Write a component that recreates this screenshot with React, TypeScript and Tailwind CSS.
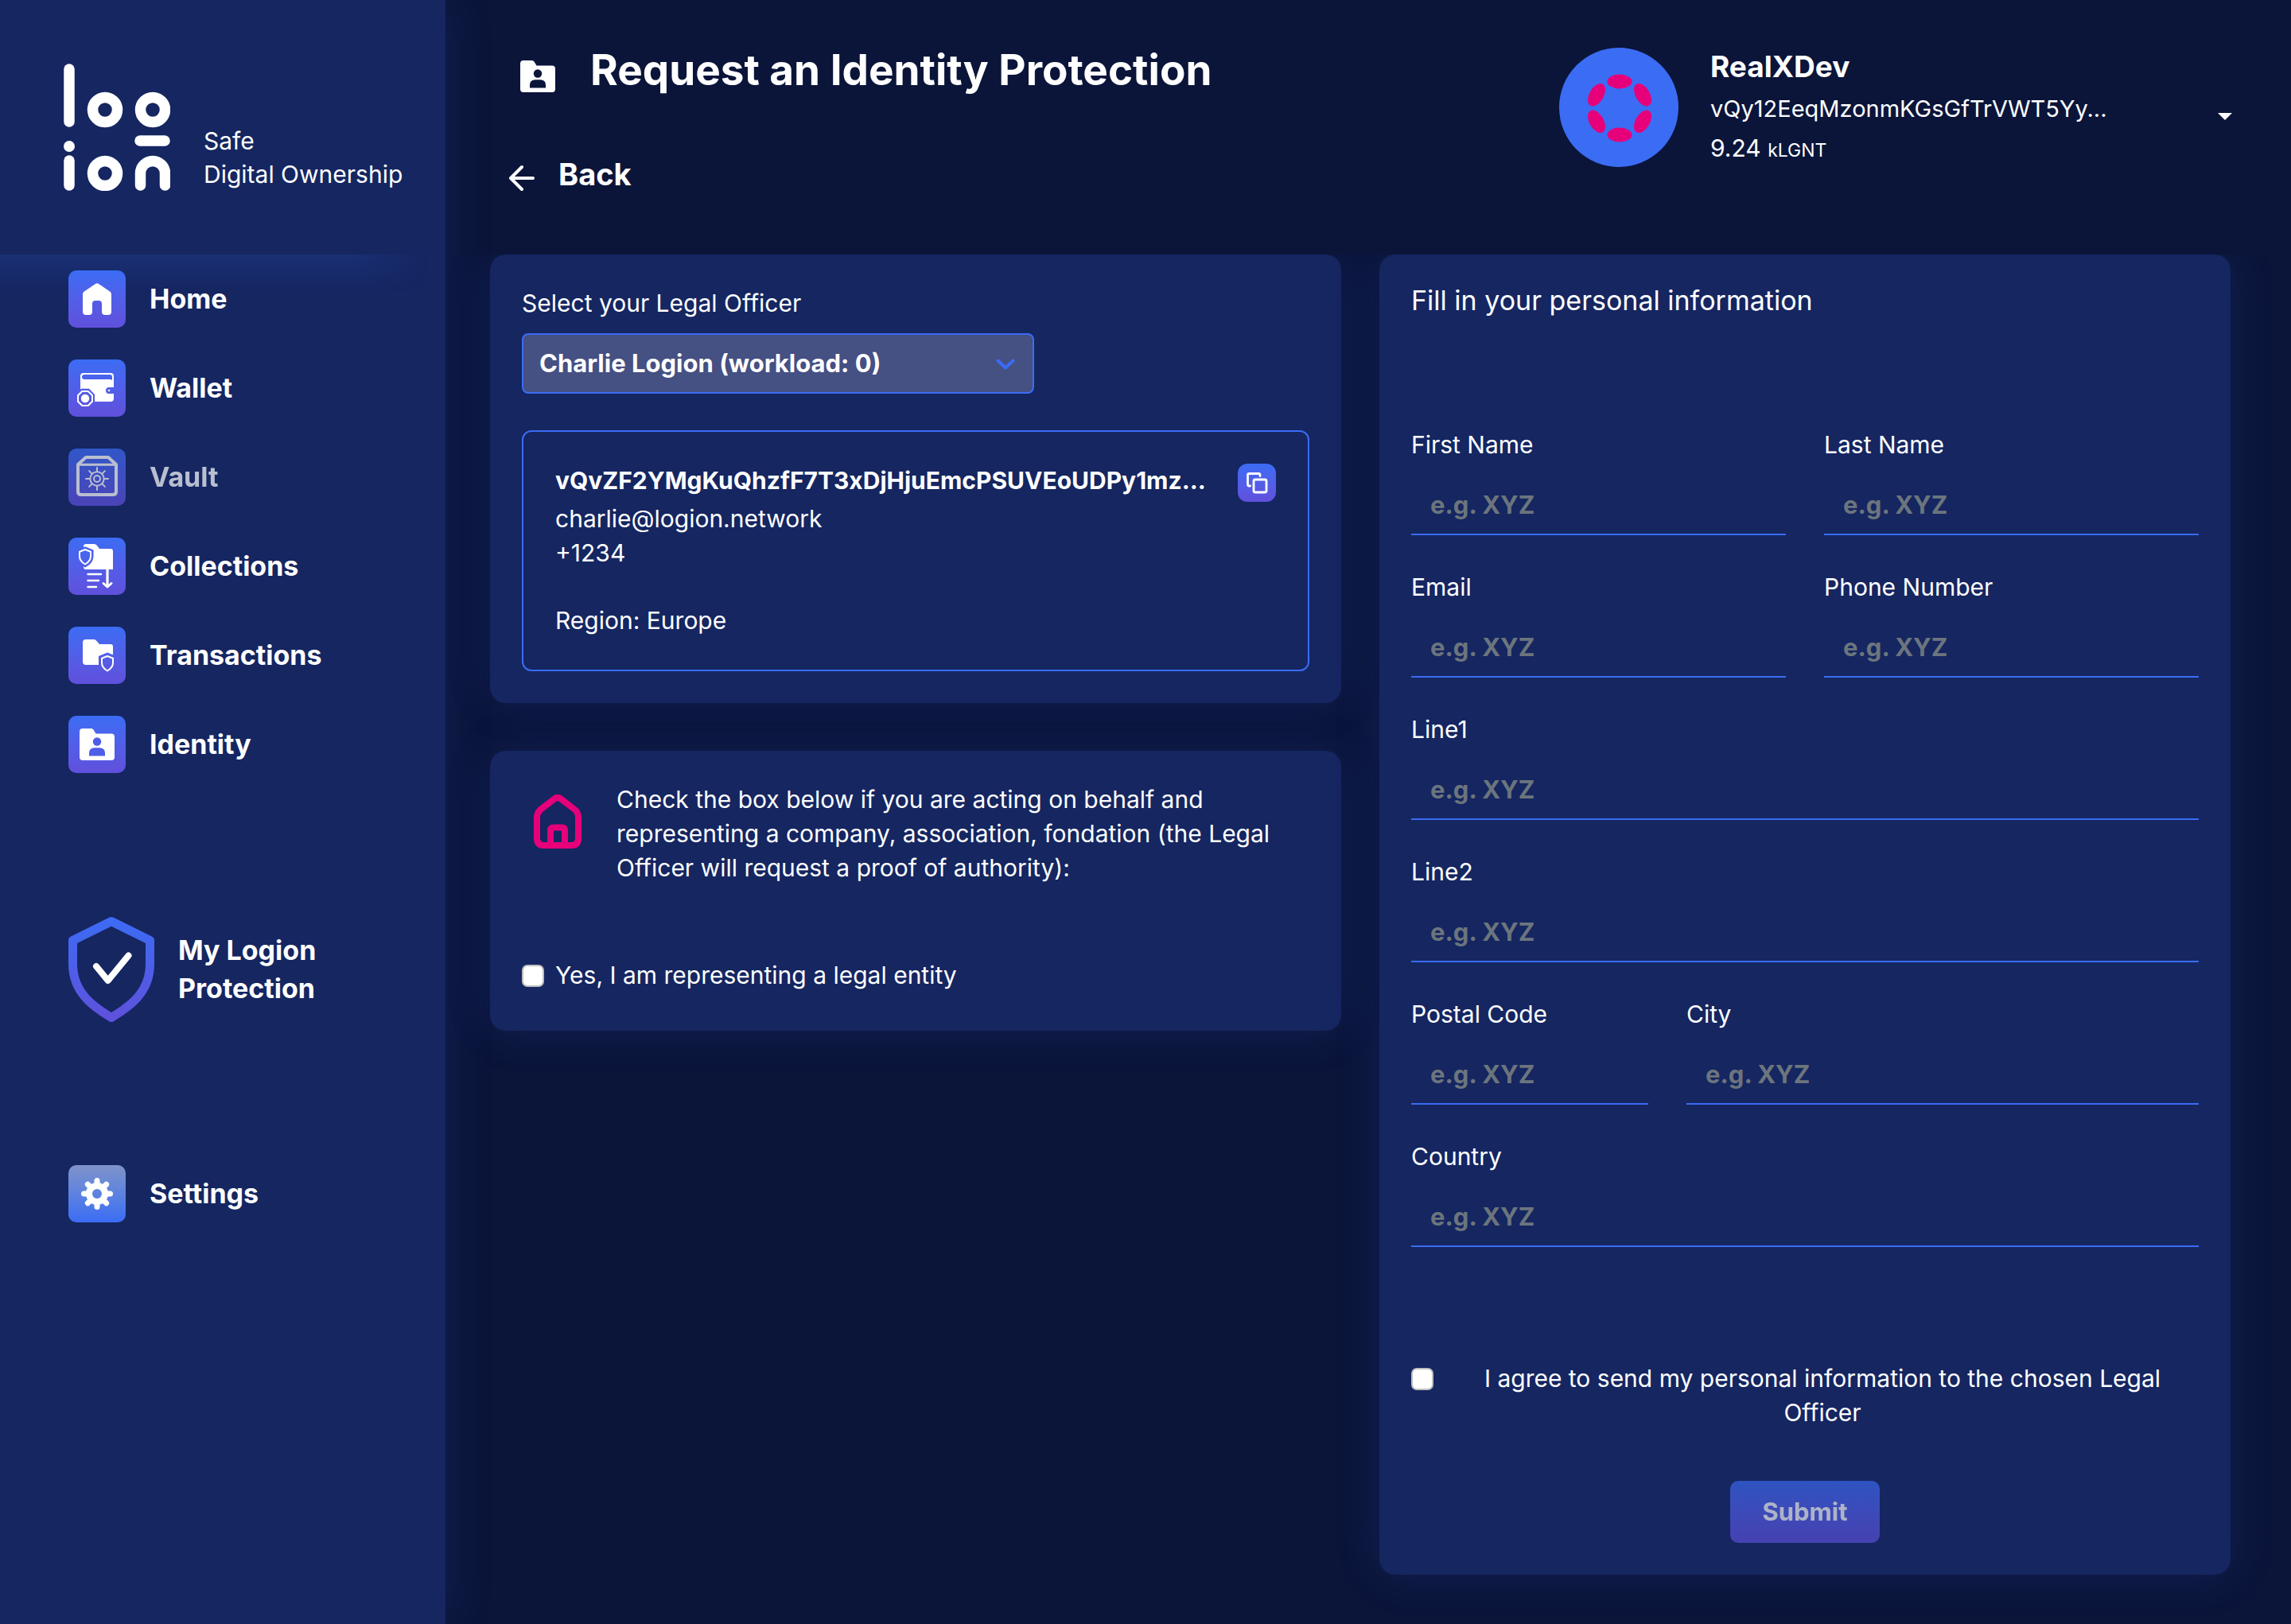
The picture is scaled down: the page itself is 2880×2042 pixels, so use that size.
import type { ReactNode } from "react";

function Logo() {
  return (
    <svg className="h-40 w-[134px] shrink-0" viewBox="0 0 134 160" fill="none" stroke="#fff" strokeWidth="13.5" aria-label="logion" role="img">
      <path d="M7 7V73" strokeLinecap="round" />
      <circle cx="52" cy="58" r="15.500" />
      <circle cx="112" cy="58" r="15.500" />
      <path d="M96 97H127" strokeLinecap="round" />
      <circle cx="7" cy="104" r="7" fill="#fff" stroke="none" />
      <path d="M7 122V153" strokeLinecap="round" />
      <circle cx="52" cy="138" r="15.500" />
      <path d="M96.500 153V138A15.500 15.500 0 0 1 127.500 138V153" strokeLinecap="round" />
    </svg>
  );
}

function HomeIcon() {
  return (
    <svg viewBox="0 0 72 72" className="size-full">
      <path fill="#fff" d="M33.500 17.200Q36 15.300 38.500 17.200L52.500 26.800Q54 28 54 30V52Q54 56 50 56H46Q42 56 42 52V42Q42 38 38 38H34Q30 38 30 42V52Q30 56 26 56H22Q18 56 18 52V30Q18 28 19.500 26.800Z" />
    </svg>
  );
}

function WalletIcon() {
  return (
    <svg viewBox="0 0 72 72" className="size-full">
      <mask id="wallet-mask">
        <rect width="72" height="72" fill="#fff" />
        <path d="M20 19H52Q55 19 55 22V26L53 25H20Q17 25 17 22Q17 19 20 19Z" fill="#000" />
        <path d="M58 35H51A4 4 0 0 0 51 43H58Z" fill="#000" />
        <path d="M16 36.800H26L33 44V54L26 61H16L9 54V44Z" fill="#000" />
      </mask>
      <rect x="15" y="17" width="42" height="36" rx="4" fill="#fff" mask="url(#wallet-mask)" />
      <circle cx="51" cy="39" r="1.300" fill="#fff" />
      <path d="M17.200 40H24.800L30 45.200V52.800L24.800 58H17.200L12 52.800V45.200Z" fill="none" stroke="#fff" strokeWidth="2" />
      <circle cx="21" cy="49" r="5.200" fill="#fff" />
    </svg>
  );
}

const SPOKES = [0, 45, 90, 135, 180, 225, 270, 315];

function VaultIcon() {
  return (
    <svg viewBox="0 0 72 72" className="size-full" fill="none" stroke="#fff">
      <path d="M12 20L22 11H50L60 20V54Q60 58 56 58H16Q12 58 12 54Z" strokeWidth="4" strokeLinejoin="round" />
      <path d="M12 20.200H60" strokeWidth="3" />
      <circle cx="36" cy="38" r="8.700" strokeWidth="2" />
      <circle cx="36" cy="38" r="4" strokeWidth="2" />
      {SPOKES.map((a) => (
        <path key={a} d="M36 29V24" strokeWidth="2" strokeLinecap="round" transform={`rotate(${a} 36 38)`} />
      ))}
    </svg>
  );
}

const SMALL_SHIELD = "M8 1L15 3.800V9.500C15 14.500 12 17.200 8 19.500C4 17.200 1 14.500 1 9.500V3.800Z";

function CollectionsIcon() {
  return (
    <svg viewBox="0 0 72 72" className="size-full" fill="none">
      <mask id="collections-mask">
        <rect width="72" height="72" fill="#fff" />
        <path d={SMALL_SHIELD} transform="translate(13 14)" fill="#000" stroke="#000" strokeWidth="7" />
      </mask>
      <path d="M22 8H32Q34.500 8 36 10L39 14H53Q56 14 56 17V40H22Q19 40 19 37V11Q19 8 22 8Z" fill="#fff" mask="url(#collections-mask)" />
      <path d={SMALL_SHIELD} transform="translate(13 14)" stroke="#fff" strokeWidth="2" strokeLinejoin="round" />
      <path d="M24.500 46H41M24.500 54H38M24.500 62H35" stroke="#fff" strokeWidth="2.500" strokeLinecap="round" />
      <path d="M49 39V61.500" stroke="#fff" strokeWidth="3.200" />
      <path d="M44 57.500L49 62L54 57.500" stroke="#fff" strokeWidth="3" strokeLinecap="round" strokeLinejoin="round" />
    </svg>
  );
}

function TransactionsIcon() {
  return (
    <svg viewBox="0 0 72 72" className="size-full" fill="none">
      <mask id="transactions-mask">
        <rect width="72" height="72" fill="#fff" />
        <path d="M38 37L49 32.500L60 37V60H38Z" fill="#000" />
      </mask>
      <path d="M22 16H32Q34 16 35.500 18L39 22H53Q56 22 56 25V48H22Q18 48 18 44V20Q18 16 22 16Z" fill="#fff" mask="url(#transactions-mask)" />
      <path d={SMALL_SHIELD} transform="translate(41 36)" stroke="#fff" strokeWidth="2" strokeLinejoin="round" />
    </svg>
  );
}

function FolderPerson({ hole }: { hole: string }) {
  return (
    <svg viewBox="0 0 44 40" className="h-10 w-11 shrink-0">
      <path fill="#fff" d="M4 0H15Q16.500 0 17.500 1.500L20.500 6.500H40Q44 6.500 44 10.500V36Q44 40 40 40H4Q0 40 0 36V4Q0 0 4 0Z" />
      <circle cx="22" cy="16.500" r="5.200" fill={hole} />
      <path d="M12 34.500V31Q12 24.300 19 24.300H25Q32 24.300 32 31V34.500Z" fill={hole} />
    </svg>
  );
}

function GearIcon() {
  return (
    <svg viewBox="0 0 72 72" className="size-full">
      <mask id="gear-mask">
        <rect width="72" height="72" fill="#fff" />
        <circle cx="36" cy="36" r="6" fill="#000" />
      </mask>
      <g mask="url(#gear-mask)" stroke="#fff" fill="#fff">
        <circle cx="36" cy="36" r="14" stroke="none" />
        {SPOKES.map((a) => (
          <path key={a} d="M36 25V19.500" strokeWidth="7" strokeLinecap="round" transform={`rotate(${a} 36 36)`} />
        ))}
      </g>
    </svg>
  );
}

function ProtectionShield() {
  return (
    <svg viewBox="0 0 108 134" className="h-[134px] w-[108px] shrink-0" fill="none">
      <defs>
        <linearGradient id="shield-fill" x1="0" y1="0" x2="0" y2="134" gradientUnits="userSpaceOnUse">
          <stop stopColor="#3b6cf4" />
          <stop offset="1" stopColor="#6050dc" />
        </linearGradient>
      </defs>
      <path d="M54 6.500L102.500 30.500V60C102.500 94 80 112 54 127.500C28 112 5.500 94 5.500 60V30.500Z" stroke="url(#shield-fill)" strokeWidth="11" strokeLinejoin="round" />
      <path d="M35 63L49.700 81L75.500 49.500" stroke="#fff" strokeWidth="8" strokeLinecap="round" strokeLinejoin="round" />
    </svg>
  );
}

function PinkHouse() {
  return (
    <svg viewBox="0 0 60 68" className="mt-[15px] h-[68px] w-[60px] shrink-0" fill="none" stroke="#e6007a" strokeWidth="8">
      <path d="M33.500 5Q30 2.800 26.500 5L9 18.500Q4 22.500 4 29V55Q4 64 13 64H47Q56 64 56 55V29Q56 22.500 51 18.500Z" />
      <path d="M21 64V45Q21 41.500 25 41.500H35Q39 41.500 39 45V64" />
    </svg>
  );
}

function Avatar() {
  return (
    <svg viewBox="0 0 150 150" className="size-[150px] shrink-0">
      <circle cx="75" cy="75" r="75" fill="#3b6cf4" />
      {[0, 60, 120, 180, 240, 300].map((a) => (
        <ellipse key={a} cx="76" cy="42.500" rx="15.500" ry="9" fill="#e6007a" transform={`rotate(${a} 76 76)`} />
      ))}
    </svg>
  );
}

function MenuItem({ label, disabled, children }: { label: string; disabled?: boolean; children: ReactNode }) {
  return (
    <a href="#" className={disabled ? "flex items-center gap-[30px] opacity-70" : "flex items-center gap-[30px]"}>
      <span className="flex size-18 items-center justify-center rounded-[10px] bg-linear-to-b from-[#3b6cf4] to-[#6050dc]">{children}</span>
      <span className="text-[34px] leading-12 font-bold">{label}</span>
    </a>
  );
}

function Field({ id, label, className }: { id: string; label: string; className: string }) {
  return (
    <div className={className}>
      <label htmlFor={id} className="mb-4 block leading-[43px]">{label}</label>
      <input
        id={id}
        type="text"
        placeholder="e.g. XYZ"
        className="block h-[76px] w-full border-b-2 border-[#3b6cf4] bg-transparent px-6 text-[31px] font-bold outline-none placeholder:text-[#6c757d]"
      />
    </div>
  );
}

const CHECKBOX = "size-7 shrink-0 appearance-none rounded-[7px] border-2 border-[#bfbfbf] bg-white checked:bg-[#3b6cf4]";
const CARD = "min-w-0 rounded-[20px] bg-[#152661] shadow-[0_0_60px_rgba(59,108,244,0.13)]";

function Sidebar() {
  return (
    <aside className="w-[560px] shrink-0 bg-[#152661] shadow-[0_0_60px_rgba(59,108,244,0.13)]">
      <div className="flex h-80 items-end gap-[42px] pb-20 pl-20">
        <Logo />
        <p className="leading-[42px]">Safe<br />Digital Ownership</p>
      </div>
      <div className="relative pt-5 pl-[86px]">
        <div className="absolute top-0 left-0 h-12 w-[540px] bg-linear-to-b from-[#3b6cf4]/13 to-transparent [mask-image:linear-gradient(to_right,black_82%,transparent)]" />
        <nav className="relative flex flex-col gap-10">
          <MenuItem label="Home"><HomeIcon /></MenuItem>
          <MenuItem label="Wallet"><WalletIcon /></MenuItem>
          <MenuItem label="Vault" disabled><VaultIcon /></MenuItem>
          <MenuItem label="Collections"><CollectionsIcon /></MenuItem>
          <MenuItem label="Transactions"><TransactionsIcon /></MenuItem>
          <MenuItem label="Identity"><FolderPerson hole="#4f5ee8" /></MenuItem>
        </nav>
        <a href="#" className="mt-[180px] flex items-center gap-[30px] text-[34px] leading-12 font-bold">
          <ProtectionShield />
          <span>My Logion<br />Protection</span>
        </a>
        <a href="#" className="mt-[179px] flex items-center gap-[30px]">
          <span className="size-18 rounded-[10px] bg-linear-to-b from-[#7f93c9] to-[#3b6cf4]"><GearIcon /></span>
          <span className="text-[34px] leading-12 font-bold">Settings</span>
        </a>
      </div>
    </aside>
  );
}

function Header() {
  return (
    <header className="flex h-80 items-start justify-between pr-[74px] pl-20">
      <div className="pt-14">
        <div className="flex items-start gap-11 pl-[14px]">
          <div className="pt-5"><FolderPerson hole="#0b153a" /></div>
          <h1 className="text-[53px] leading-16 font-bold">Request an Identity Protection</h1>
        </div>
        <button type="button" className="mt-[71px] flex items-center gap-[30px] text-[38px] leading-14 font-bold">
          <svg viewBox="0 0 32 42" className="h-[42px] w-8" fill="none" stroke="#fff" strokeWidth="4" strokeLinecap="round" strokeLinejoin="round">
            <path d="M30 26H2M16 12L2 26L16 40" />
          </svg>
          Back
        </button>
      </div>
      <div className="flex w-[846px] items-start pt-[60px]">
        <Avatar />
        <div className="ml-10">
          <p className="mb-1 text-[37px] leading-12 font-bold">RealXDev</p>
          <p className="text-[29px] leading-[50px]">vQy12EeqMzonmKGsGfTrVWT5Yy...</p>
          <p className="leading-12">9.24 <span className="text-[23px]">kLGNT</span></p>
        </div>
        <button type="button" aria-label="Switch account" className="mt-[82px] ml-auto">
          <svg viewBox="0 0 18 9" className="h-[9px] w-[18px]" fill="#fff"><path d="M0 0H18L9 9Z" /></svg>
        </button>
      </div>
    </header>
  );
}

function LegalOfficerCard() {
  return (
    <section className={`${CARD} p-10`}>
      <label htmlFor="officer" className="block leading-[43px]">Select your Legal Officer</label>
      <div className="relative mt-4 w-[65%]">
        <select id="officer" className="block h-[76px] w-full appearance-none rounded-lg border-2 border-[#3b6cf4] bg-[#455083] px-5 text-[31px] font-bold text-white outline-none">
          <option>Charlie Logion (workload: 0)</option>
        </select>
        <svg viewBox="0 0 24 14" className="pointer-events-none absolute top-8 right-6 h-[14px] w-6" fill="none" stroke="#3b6cf4" strokeWidth="4" strokeLinecap="round" strokeLinejoin="round">
          <path d="M2.500 2.500L12 11.500L21.500 2.500" />
        </svg>
      </div>
      <div className="mt-[46px] rounded-xl border-2 border-[#3b6cf4] p-10 leading-[43px]">
        <div className="flex h-12 items-start justify-between">
          <p className="font-bold whitespace-nowrap">vQvZF2YMgKuQhzfF7T3xDjHjuEmcPSUVEoUDPy1mz...</p>
          <button type="button" aria-label="Copy address" className="size-12 shrink-0 rounded-xl bg-linear-to-b from-[#3b6cf4] to-[#6050dc]">
            <svg viewBox="0 0 48 48" className="size-full" fill="none" stroke="#fff" strokeWidth="2.800" strokeLinecap="round" strokeLinejoin="round">
              <path d="M15.500 28H14.500Q12.500 28 12.500 26V14.500Q12.500 12.500 14.500 12.500H26Q28 12.500 28 14.500V15.500" />
              <rect x="20" y="20" width="16" height="16" rx="2" />
            </svg>
          </button>
        </div>
        <p>charlie@logion.network</p>
        <p>+1234</p>
        <p className="mt-[42px]">Region: Europe</p>
      </div>
    </section>
  );
}

function LegalEntityCard() {
  return (
    <section className={`${CARD} px-10 pt-10 pb-12`}>
      <div className="flex items-start gap-11 pl-[15px]">
        <PinkHouse />
        <p className="leading-[43px]">
          Check the box below if you are acting on behalf and representing a company, association, fondation (the Legal Officer will request a proof of authority):
        </p>
      </div>
      <div className="mt-[92px] flex items-center gap-3.5">
        <input id="entity" type="checkbox" className={CHECKBOX} />
        <label htmlFor="entity" className="leading-[43px]">Yes, I am representing a legal entity</label>
      </div>
    </section>
  );
}

function PersonalInfoCard() {
  return (
    <form className={`${CARD} p-10`}>
      <h2 className="text-[34px] leading-9">Fill in your personal information</h2>
      <div className="mt-[142px] grid grid-cols-6 gap-x-12 gap-y-11">
        <Field id="first" label="First Name" className="col-span-3" />
        <Field id="last" label="Last Name" className="col-span-3" />
        <Field id="email" label="Email" className="col-span-3" />
        <Field id="phone" label="Phone Number" className="col-span-3" />
        <Field id="line1" label="Line1" className="col-span-6" />
        <Field id="line2" label="Line2" className="col-span-6" />
        <Field id="postal" label="Postal Code" className="col-span-2" />
        <Field id="city" label="City" className="col-span-4" />
        <Field id="country" label="Country" className="col-span-6" />
      </div>
      <div className="mt-36 flex items-start gap-4">
        <input id="agree" type="checkbox" className={`${CHECKBOX} mt-2`} />
        <label htmlFor="agree" className="flex-1 text-center leading-[43px]">I agree to send my personal information to the chosen Legal Officer</label>
      </div>
      <div className="mt-16 flex justify-center">
        <button type="submit" disabled className="h-[78px] rounded-[10px] bg-linear-to-b from-[#3b6cf4] to-[#6050dc] px-10 text-[31px] font-bold opacity-65">Submit</button>
      </div>
    </form>
  );
}

export default function App() {
  return (
    <div className="flex min-h-screen bg-[#0b153a] font-['Inter',sans-serif] text-[30px] text-white">
      <Sidebar />
      <main className="min-w-0 flex-1">
        <Header />
        <div className="grid grid-cols-2 items-start gap-12 overflow-hidden pr-[76px] pb-[60px] pl-14">
          <div className="flex min-w-0 flex-col gap-[60px]">
            <LegalOfficerCard />
            <LegalEntityCard />
          </div>
          <PersonalInfoCard />
        </div>
      </main>
    </div>
  );
}
